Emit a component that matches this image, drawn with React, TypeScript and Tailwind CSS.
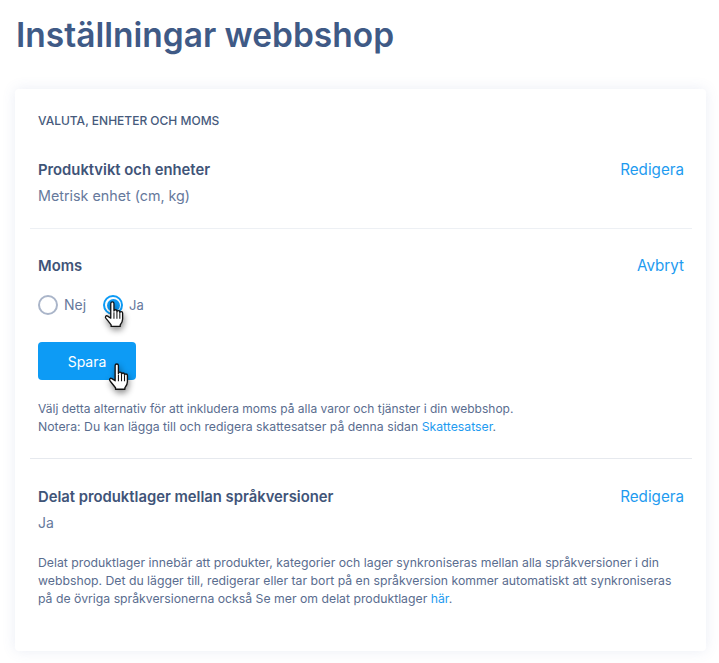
import React from "react";

function HandCursor({ className }: { className: string }) {
  return (
    <svg
      viewBox="0 0 24 30"
      className={className}
      style={{ filter: "drop-shadow(1px 3px 3px rgba(0,0,0,0.45))" }}
    >
      <path
        d="M8 2.6c0-2.1 3.4-2.1 3.4 0v8.2c0-1.9 3.2-1.9 3.2 0v.9c0-1.8 3.1-1.8 3.1 0v.9c0-1.7 3-1.6 3 .2v6.6c0 3.2-1.6 5-2.6 6.2v1.6H8.4v-1.6c-1.4-1.7-3.2-4.2-5.4-6.7-1.7-2-.1-3.8 1.7-2.7L8 18.4z"
        fill="#fff"
        stroke="#111"
        strokeWidth="1.4"
        strokeLinejoin="round"
      />
      <path d="M11.4 12v7M14.6 12v7M17.7 13v6" stroke="#111" strokeWidth="1.1" fill="none" />
    </svg>
  );
}

function SectionHead({ title, action }: { title: string; action: string }) {
  return (
    <div className="flex items-center justify-between">
      <h3 className="text-[14.8px] leading-5 font-semibold text-[#3f5478]">{title}</h3>
      <a className="text-[15.2px] leading-5 text-[#1e9bf0]">{action}</a>
    </div>
  );
}

export default function App() {
  return (
    <div
      className="min-h-[663px] bg-white pl-[15px] pt-[12px] overflow-hidden"
      style={{ fontFamily: "Inter, 'Noto Sans', sans-serif" }}
    >
      <h1 className="pl-px text-[33.5px] leading-[46px] font-semibold text-[#3f5a86]">Inställningar webbshop</h1>

      <div className="mt-[31px] h-[562px] w-[691px] rounded-[4px] bg-white shadow-[0_0_14px_rgba(80,110,170,0.12)] pl-[15px] pr-[14px] pt-[24px]">
        <p className="px-2 text-[12px] leading-4 font-medium text-[#465a7c]">VALUTA, ENHETER OCH MOMS</p>

        <div className="mt-[31px] px-2 pb-[22px]">
          <SectionHead title="Produktvikt och enheter" action="Redigera" />
          <p className="mt-[6px] text-[14.3px] leading-5 text-[#66799c]">Metrisk enhet (cm, kg)</p>
        </div>

        <div className="border-t border-[#edf0f4] px-2 pt-[27px] pb-[22px]">
          <SectionHead title="Moms" action="Avbryt" />

          <div className="mt-[19px] flex items-center text-[14px] leading-5 text-[#66799c]">
            <span className="h-5 w-5 rounded-full border-2 border-[#aab5c9] bg-white" />
            <span className="ml-[6px]">Nej</span>
            <span className="relative ml-[17px] flex h-5 w-5 items-center justify-center rounded-full border-2 border-[#0d9bf5] bg-white">
              <span className="h-[13px] w-[13px] rounded-full bg-[#0d9bf5]" />
              <HandCursor className="absolute left-[-2px] top-[4px] h-[28px] w-[23px]" />
            </span>
            <span className="ml-[6px] text-[13px]">Ja</span>
          </div>

          <div className="relative mt-[27px] flex h-[38px] w-[98px] items-center justify-center rounded-[4px] bg-[#0d9bf5] text-[14px] text-white">
            Spara
            <HandCursor className="absolute left-[69px] top-[21px] h-[29px] w-[24px]" />
          </div>

          <p className="mt-[20px] text-[12px] leading-[18px] text-[#5a6d8f]">
            Välj detta alternativ för att inkludera moms på alla varor och tjänster i din webbshop.
            <br />
            <span className="text-[12.25px]">
              Notera: Du kan lägga till och redigera skattesatser på denna sidan <a className="text-[#1e9bf0]">Skattesatser</a>.
            </span>
          </p>
        </div>

        <div className="border-t border-[#e6e9ee] px-2 pt-[28px]">
          <SectionHead title="Delat produktlager mellan språkversioner" action="Redigera" />
          <p className="mt-[6px] text-[14px] leading-5 text-[#66799c]">Ja</p>
          <p className="mt-[21px] text-[12.25px] leading-[18px] text-[#5a6d8f]">
            Delat produktlager innebär att produkter, kategorier och lager synkroniseras mellan alla språkversioner i din
            webbshop. Det du lägger till, redigerar eller tar bort på en språkversion kommer automatiskt att synkroniseras
            på de övriga språkversionerna också Se mer om delat produktlager <a className="text-[#1e9bf0]">här</a>.
          </p>
        </div>
      </div>
    </div>
  );
}
